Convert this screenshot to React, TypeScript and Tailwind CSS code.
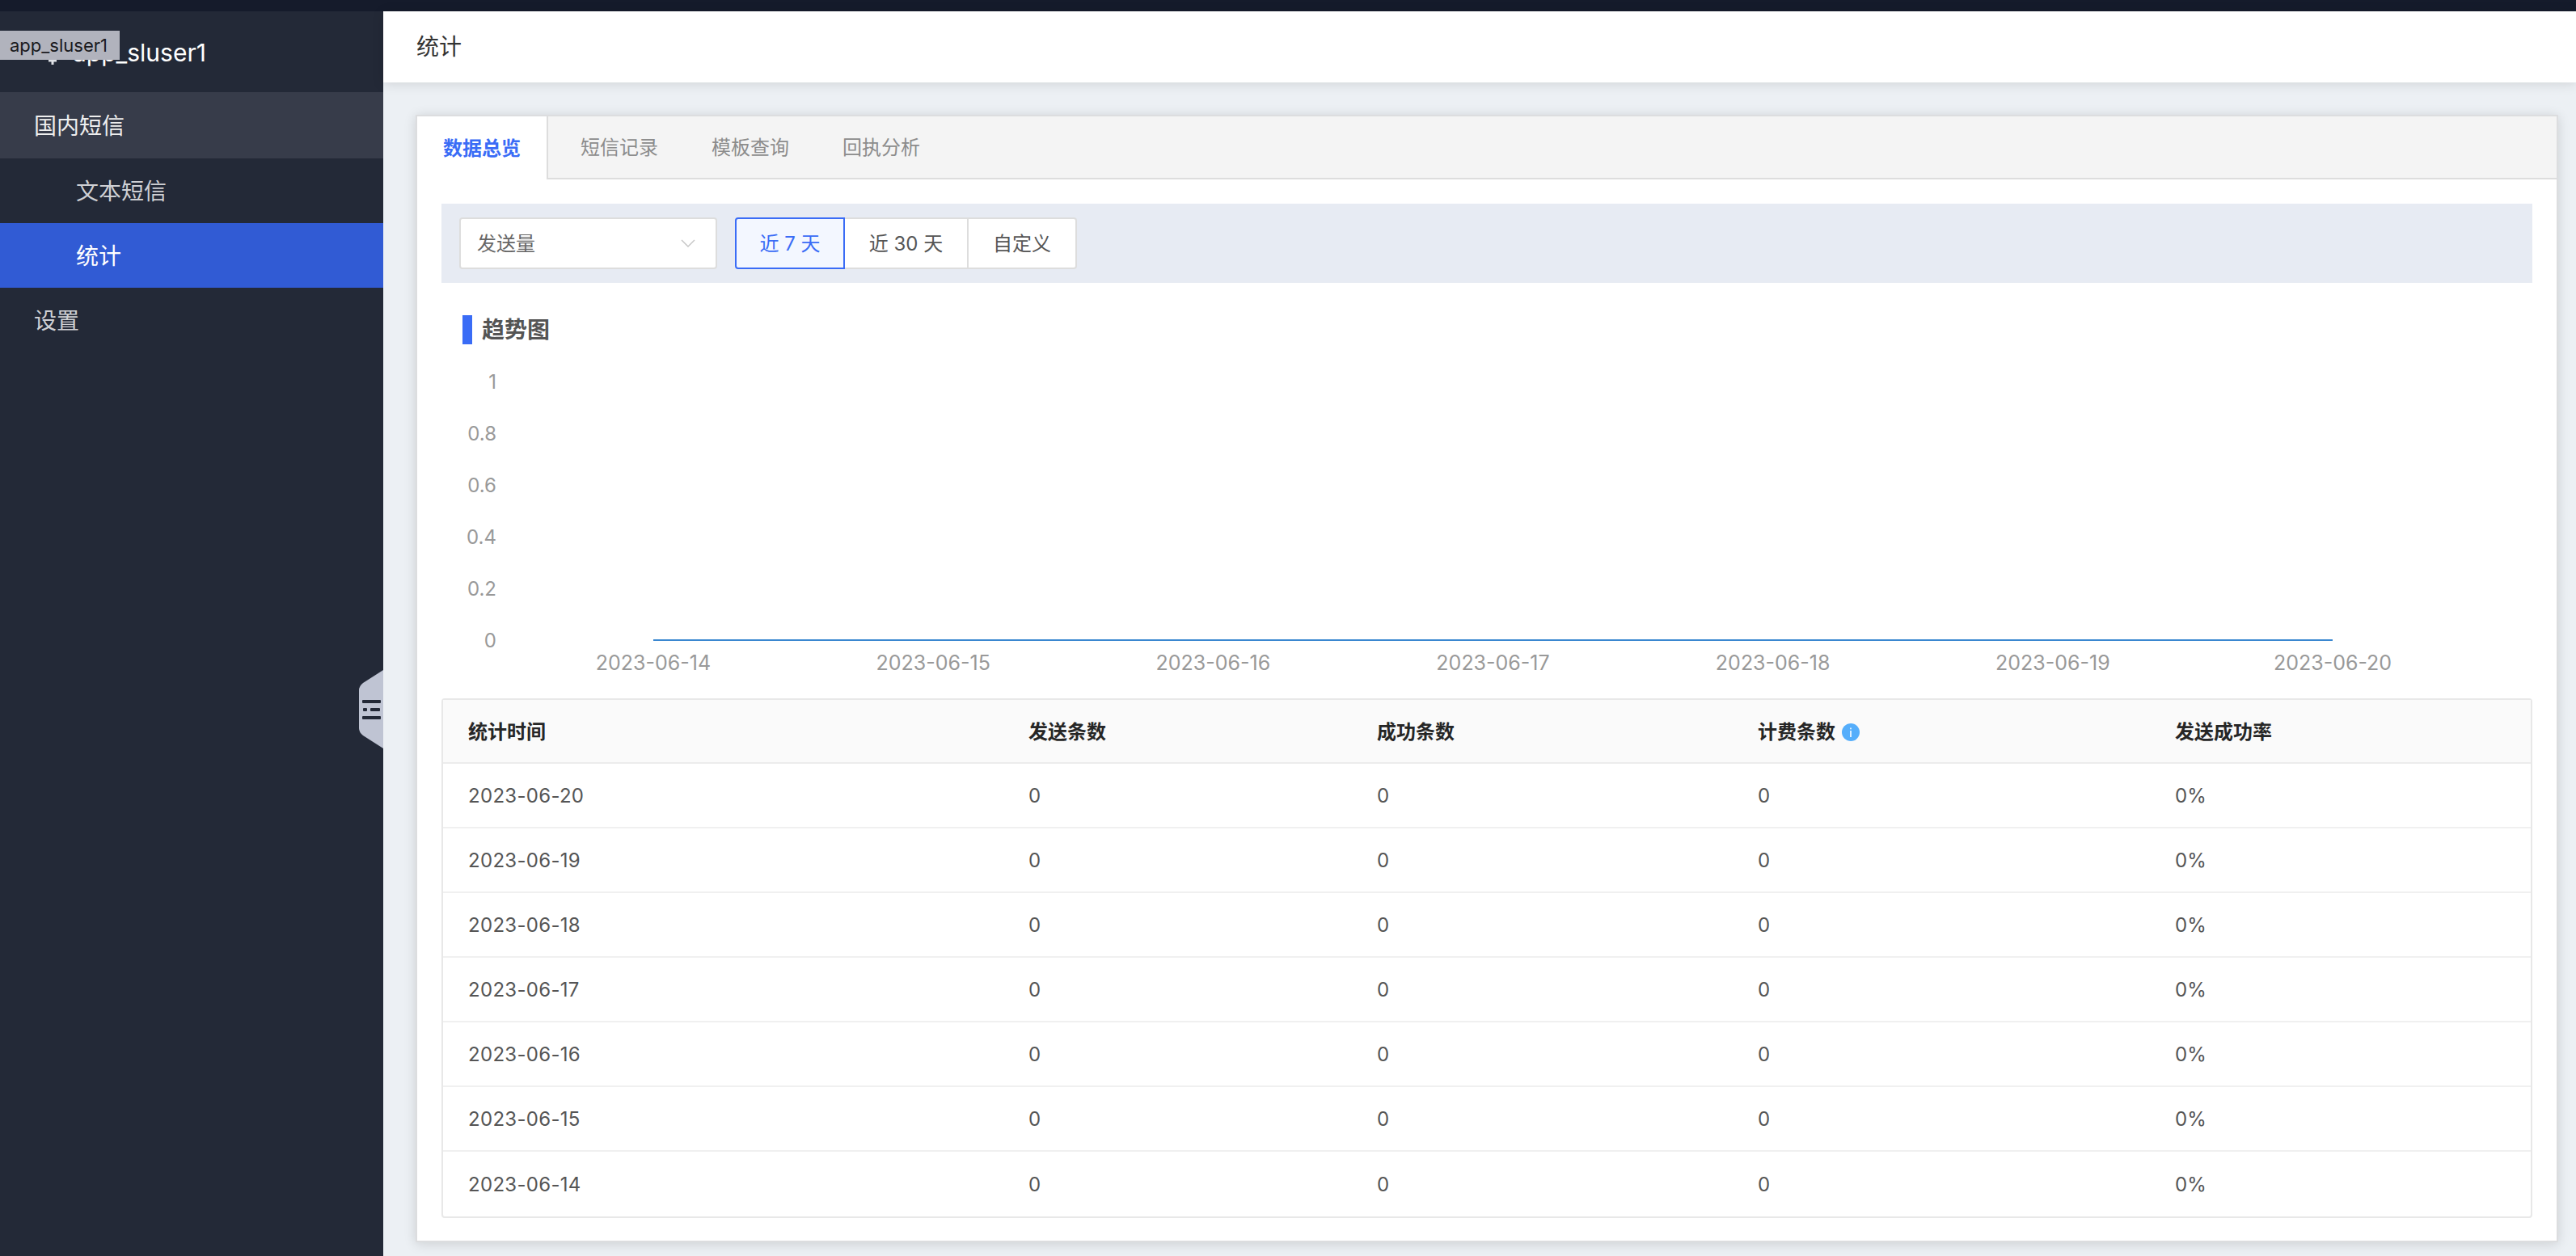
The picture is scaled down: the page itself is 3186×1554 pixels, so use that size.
import React from "react";

const rows = ["2023-06-20", "2023-06-19", "2023-06-18", "2023-06-17", "2023-06-16", "2023-06-15", "2023-06-14"];
const xLabels = ["2023-06-14", "2023-06-15", "2023-06-16", "2023-06-17", "2023-06-18", "2023-06-19", "2023-06-20"];
const yLabels = ["1", "0.8", "0.6", "0.4", "0.2", "0"];
const gridCols = "grid grid-cols-[693px_431px_471px_516px_1fr]";

function Sidebar() {
  return (
    <aside className="relative w-[474px] shrink-0 bg-[#232937] text-[28px]">
      <div className="flex h-[100px] items-center pl-[50px] pt-[2px]">
        <svg width="30" height="30" viewBox="0 0 30 30" className="mr-[10px]">
          <path d="M10 25h10M15 25v5" stroke="#dfe1e6" strokeWidth="3" fill="none" />
        </svg>
        <span className="text-[30px] leading-none text-white">app_sluser1</span>
      </div>
      <div className="absolute left-0 top-[24px] flex h-[36px] w-[148px] items-center bg-[#b1b3bd] pl-[12px] text-[22px] leading-none text-[#1a1a1e]">
        app_sluser1
      </div>
      <div className="flex h-[82px] items-center bg-[#373c4a] pl-[42px] pt-[1px] text-[#eeeeee]">国内短信</div>
      <div className="flex h-[80px] items-center pl-[94px] pt-[1px] text-[#cfd0d4]">文本短信</div>
      <div className="flex h-[80px] items-center bg-[#315bd4] pl-[94px] pt-[1px] text-white">统计</div>
      <div className="flex h-[80px] items-center pl-[42px] pt-[1px] text-[#cfd0d4]">设置</div>
      <svg className="absolute left-[443px] top-[815px]" width="31" height="97" viewBox="0 0 31 97">
        <path d="M31 0 L6 16 Q1 20 1 25 L1 72 Q1 77 6 81 L31 97 Z" fill="#bfc4d3" />
        <g fill="#232937">
          <rect x="5" y="37" width="23" height="4" rx="1" />
          <rect x="6" y="47" width="5" height="4" rx="1" />
          <rect x="15" y="47" width="12" height="4" rx="1" />
          <rect x="5" y="57" width="23" height="4" rx="1" />
        </g>
      </svg>
    </aside>
  );
}

function Tabs() {
  return (
    <div className="flex h-[78px] border-b-2 border-[#dddddd] bg-[#f4f4f4] text-[24px] leading-none">
      <div className="-mb-[2px] flex h-[78px] w-[162px] items-center justify-center border-r-2 border-[#dddddd] bg-white pt-[2px] font-bold text-[#3a6cf6]">
        数据总览
      </div>
      <div className="ml-[7px] flex w-[162px] items-center justify-center pt-[2px] text-[#8c8c8c]">短信记录</div>
      <div className="flex w-[162px] items-center justify-center pt-[2px] text-[#8c8c8c]">模板查询</div>
      <div className="flex w-[162px] items-center justify-center pt-[2px] text-[#8c8c8c]">回执分析</div>
    </div>
  );
}

function Filters() {
  return (
    <div className="flex h-[98px] items-center bg-[#e7ebf3] pl-[22px] text-[24px] leading-none">
      <div className="flex h-[64px] w-[319px] items-center justify-between rounded-[4px] border-2 border-[#dddddd] bg-white pl-[20px] pr-[25px] text-[#666666]">
        <span className="pt-[1px]">发送量</span>
        <svg width="18" height="10" viewBox="0 0 18 10" fill="none" stroke="#c4c4c4" strokeWidth="1.4">
          <path d="M1 1 L9 9 L17 1" />
        </svg>
      </div>
      <div className="ml-[22px] flex h-[64px]">
        <div className="flex w-[136px] items-center justify-center rounded-l-[4px] border-2 border-[#3a6cf6] bg-[#f3f7ff] pt-[1px] text-[#3a6cf6]">
          近 7 天
        </div>
        <div className="flex w-[153px] items-center justify-center border-y-2 border-r-2 border-[#dddddd] bg-white pt-[1px] text-[#555555]">
          近 30 天
        </div>
        <div className="flex w-[134px] items-center justify-center rounded-r-[4px] border-y-2 border-r-2 border-[#dddddd] bg-white pt-[1px] text-[#555555]">
          自定义
        </div>
      </div>
    </div>
  );
}

function Chart() {
  return (
    <svg width="2586" height="438" viewBox="0 0 2586 438" className="block">
      {yLabels.map((l, i) => (
        <text key={l} x="68" y={46 + i * 64 + 9} textAnchor="end" className="fill-[#999999] text-[24px]">
          {l}
        </text>
      ))}
      <line x1="262" y1="366" x2="2339" y2="366" stroke="#3a87d0" strokeWidth="2" />
      {xLabels.map((l, i) => (
        <text key={l} x={262 + i * 346.17} y="403" textAnchor="middle" className="fill-[#999999] text-[25px]">
          {l}
        </text>
      ))}
    </svg>
  );
}

function InfoIcon() {
  return (
    <svg width="22" height="22" viewBox="0 0 22 22" className="ml-[8px]">
      <circle cx="11" cy="11" r="11" fill="#55aefb" />
      <rect x="10.2" y="9" width="1.6" height="8" fill="#ffffff" />
      <rect x="10.2" y="5.5" width="1.6" height="1.8" fill="#ffffff" />
    </svg>
  );
}

function DataTable() {
  const head = ["统计时间", "发送条数", "成功条数", "计费条数", "发送成功率"];
  return (
    <div className="rounded-[4px] border-2 border-[#e8e8e8] bg-white">
      <div className={`${gridCols} h-[79px] items-center border-b-2 border-[#ececec] bg-[#fafafa] text-[24px] font-bold leading-none text-[#262626]`}>
        {head.map((h, i) => (
          <div key={h} className="flex items-center pl-[31px] pt-[2px]">
            {h}
            {i === 3 && <InfoIcon />}
          </div>
        ))}
      </div>
      {rows.map((d, idx) => (
        <div
          key={d}
          className={`${gridCols} h-[80px] items-center pt-[2px] text-[24px] leading-none text-[#555555] ${idx < rows.length - 1 ? "border-b-2 border-[#f0f0f0]" : ""}`}
        >
          <div className="pl-[31px] tracking-[0.3px]">{d}</div>
          <div className="pl-[31px]">0</div>
          <div className="pl-[31px]">0</div>
          <div className="pl-[31px]">0</div>
          <div className="pl-[31px]">0%</div>
        </div>
      ))}
    </div>
  );
}

export default function App() {
  return (
    <div className="flex h-screen w-full flex-col overflow-hidden bg-[#ecf0f4] font-['Inter','Noto_Sans_CJK_SC',sans-serif]">
      <div className="h-[14px] shrink-0 bg-[#151b2b]" />
      <div className="flex min-h-0 flex-1">
        <Sidebar />
        <main className="flex min-w-0 flex-1 flex-col">
          <header className="relative z-10 flex h-[88px] shrink-0 items-center bg-white pl-[41px] text-[28px] text-[#333333] shadow-[0_2px_14px_rgba(0,0,0,0.12)]">
            统计
          </header>
          <div className="pb-[18px] pl-[40px] pr-[22px] pt-[40px]">
            <section className="border-2 border-[#dcdddf] bg-white shadow-[0_2px_14px_rgba(0,0,0,0.14)]">
              <Tabs />
              <div className="px-[30px] pb-[28px] pt-[30px]">
                <Filters />
                <div className="ml-[26px] mt-[40px] flex h-[36px] items-center text-[28px] font-bold leading-none text-[#555555]">
                  <span className="mr-[12px] h-[36px] w-[12px] bg-[#3a6cf6]" />
                  趋势图
                </div>
                <Chart />
                <DataTable />
              </div>
            </section>
          </div>
        </main>
      </div>
    </div>
  );
}
